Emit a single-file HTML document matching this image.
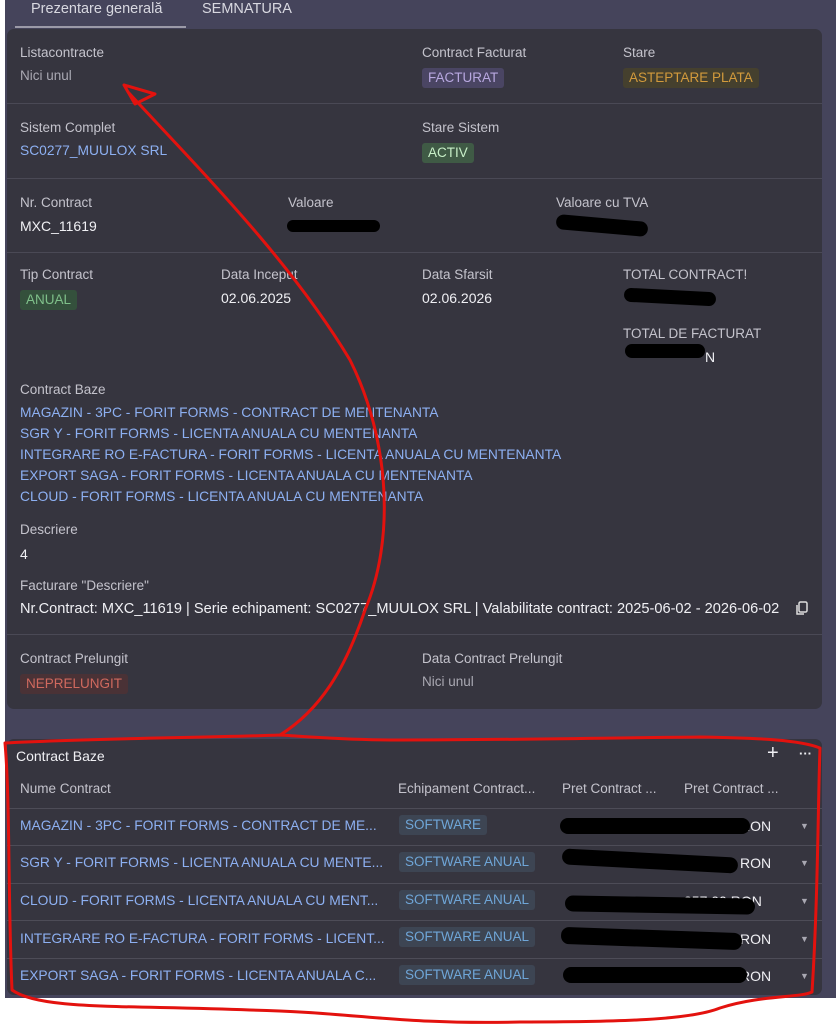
<!DOCTYPE html>
<html><head><meta charset="utf-8"><style>
*{margin:0;padding:0;box-sizing:border-box}
body{width:836px;height:1027px;background:#fff;position:relative;overflow:hidden;font-family:"Liberation Sans",sans-serif;font-size:13.5px}
.a{position:absolute;white-space:nowrap;line-height:16px}
.bg{position:absolute;left:5px;top:0;width:831px;height:998px;background:#45445b}
.card{position:absolute;left:7px;width:815px;background:#36353f;border-radius:7px}
.l{color:#c4c3cc}
.v{color:#f0f0f4;font-size:14px}
.k{color:#8db0f2;font-size:13.8px}
.m{color:#a9a8b2}
.hr{position:absolute;left:7px;width:815px;height:1px;background:#4a4955}
.tag{position:absolute;padding:2px 6px;border-radius:3px;line-height:16px;font-size:13.5px}
.t2{position:absolute;left:7px;width:815px;height:1px;background:#4d4c57}
.sw{background:#3d4553;color:#6fa6d8}
.blk{position:absolute;background:#000;border-radius:8px}
</style></head><body>
<div class="bg"></div>
<div class="a" style="left:31px;top:1px;color:#d8d8e0;font-size:14.5px">Prezentare generală</div>
<div class="a" style="left:202px;top:1px;color:#d8d8e0;font-size:14.5px">SEMNATURA</div>
<div style="position:absolute;left:15px;top:26px;width:171px;height:2px;background:#9b9aa8"></div>

<div class="card" style="top:29px;height:680px"></div>
<div class="a l" style="left:20px;top:45px">Listacontracte</div>
<div class="a m" style="left:20px;top:68px">Nici unul</div>
<div class="a l" style="left:422px;top:45px">Contract Facturat</div>
<div class="tag" style="left:422px;top:68px;background:#4a4563;color:#b8a8e0">FACTURAT</div>
<div class="a l" style="left:623px;top:45px">Stare</div>
<div class="tag" style="left:623px;top:68px;background:#45402e;color:#d29a3c">ASTEPTARE PLATA</div>
<div class="hr" style="top:103px"></div>
<div class="a l" style="left:20px;top:120px">Sistem Complet</div>
<div class="a k" style="left:20px;top:143px">SC0277_MUULOX SRL</div>
<div class="a l" style="left:422px;top:120px">Stare Sistem</div>
<div class="tag" style="left:422px;top:143px;background:#3f5a45;color:#c8f0c8">ACTIV</div>
<div class="hr" style="top:178px"></div>
<div class="a l" style="left:20px;top:195px">Nr. Contract</div>
<div class="a v" style="left:20px;top:218px">MXC_11619</div>
<div class="a l" style="left:288px;top:195px">Valoare</div>
<div class="a l" style="left:556px;top:195px">Valoare cu TVA</div>
<div class="hr" style="top:252px"></div>
<div class="a l" style="left:20px;top:267px">Tip Contract</div>
<div class="tag" style="left:20px;top:290px;background:#34503c;color:#7fc08a">ANUAL</div>
<div class="a l" style="left:221px;top:267px">Data Inceput</div>
<div class="a v" style="left:221px;top:290px">02.06.2025</div>
<div class="a l" style="left:422px;top:267px">Data Sfarsit</div>
<div class="a v" style="left:422px;top:290px">02.06.2026</div>
<div class="a l" style="left:623px;top:267px">TOTAL CONTRACT!</div>
<div class="a l" style="left:623px;top:326px">TOTAL DE FACTURAT</div>
<div class="a v" style="left:705px;top:349px">N</div>
<div class="a l" style="left:20px;top:382px">Contract Baze</div>
<div class="a k" style="left:20px;top:405px">MAGAZIN - 3PC - FORIT FORMS - CONTRACT DE MENTENANTA</div>
<div class="a k" style="left:20px;top:426px">SGR Y - FORIT FORMS - LICENTA ANUALA CU MENTENANTA</div>
<div class="a k" style="left:20px;top:447px">INTEGRARE RO E-FACTURA - FORIT FORMS - LICENTA ANUALA CU MENTENANTA</div>
<div class="a k" style="left:20px;top:468px">EXPORT SAGA - FORIT FORMS - LICENTA ANUALA CU MENTENANTA</div>
<div class="a k" style="left:20px;top:489px">CLOUD - FORIT FORMS - LICENTA ANUALA CU MENTENANTA</div>
<div class="a l" style="left:20px;top:522px">Descriere</div>
<div class="a v" style="left:20px;top:546px">4</div>
<div class="a l" style="left:20px;top:578px">Facturare "Descriere"</div>
<div class="a v" style="left:20px;top:601px;font-size:14.6px">Nr.Contract: MXC_11619 | Serie echipament: SC0277_MUULOX SRL | Valabilitate contract: 2025-06-02 - 2026-06-02</div>
<svg style="position:absolute;left:795px;top:601px" width="14" height="15" viewBox="0 0 14 15"><rect x="4" y="1" width="8" height="10" rx="1.5" fill="none" stroke="#ddd" stroke-width="1.5"/><path d="M2 4v9h7" fill="none" stroke="#ddd" stroke-width="1.5"/></svg>
<div class="hr" style="top:634px"></div>
<div class="a l" style="left:20px;top:651px">Contract Prelungit</div>
<div class="tag" style="left:20px;top:674px;background:#4a3236;color:#d0695e">NEPRELUNGIT</div>
<div class="a l" style="left:422px;top:651px">Data Contract Prelungit</div>
<div class="a m" style="left:422px;top:674px">Nici unul</div>

<div class="card" style="top:739px;height:256px"></div>
<div class="a v" style="left:16px;top:748px;font-size:14px">Contract Baze</div>
<div class="a v" style="left:767px;top:745px;font-size:20px">+</div>
<div class="a v" style="left:799px;top:746px;font-size:13px;font-weight:bold">···</div>
<div class="a l" style="left:20px;top:781px">Nume Contract</div>
<div class="a l" style="left:398px;top:781px">Echipament Contract...</div>
<div class="a l" style="left:562px;top:781px">Pret Contract ...</div>
<div class="a l" style="left:684px;top:781px">Pret Contract ...</div>
<div class="t2" style="top:808px"></div>
<div class="t2" style="top:845px"></div>
<div class="t2" style="top:883px"></div>
<div class="t2" style="top:920px"></div>
<div class="t2" style="top:958px"></div>
<div class="a k" style="left:20px;top:818px">MAGAZIN - 3PC - FORIT FORMS - CONTRACT DE ME...</div>
<div class="a k" style="left:20px;top:855px">SGR Y - FORIT FORMS - LICENTA ANUALA CU MENTE...</div>
<div class="a k" style="left:20px;top:893px">CLOUD - FORIT FORMS - LICENTA ANUALA CU MENT...</div>
<div class="a k" style="left:20px;top:931px">INTEGRARE RO E-FACTURA - FORIT FORMS - LICENT...</div>
<div class="a k" style="left:20px;top:968px">EXPORT SAGA - FORIT FORMS - LICENTA ANUALA C...</div>
<div class="tag sw" style="left:399px;top:815px">SOFTWARE</div>
<div class="tag sw" style="left:399px;top:852px">SOFTWARE ANUAL</div>
<div class="tag sw" style="left:399px;top:890px">SOFTWARE ANUAL</div>
<div class="tag sw" style="left:399px;top:927px">SOFTWARE ANUAL</div>
<div class="tag sw" style="left:399px;top:965px">SOFTWARE ANUAL</div>
<div class="a v" style="left:740px;top:818px">RON</div>
<div class="a v" style="left:740px;top:855px">RON</div>
<div class="a v" style="left:684px;top:893px">357.00 RON</div>
<div class="a v" style="left:740px;top:931px">RON</div>
<div class="a v" style="left:740px;top:968px">RON</div>
<div class="a m" style="left:800px;top:818px;font-size:9px">▼</div>
<div class="a m" style="left:800px;top:855px;font-size:9px">▼</div>
<div class="a m" style="left:800px;top:893px;font-size:9px">▼</div>
<div class="a m" style="left:800px;top:931px;font-size:9px">▼</div>
<div class="a m" style="left:800px;top:968px;font-size:9px">▼</div>

<div class="blk" style="left:287px;top:220px;width:93px;height:12px"></div>
<div class="blk" style="left:556px;top:218px;width:92px;height:15px;transform:rotate(5deg)"></div>
<div class="blk" style="left:624px;top:290px;width:92px;height:14px;transform:rotate(3deg)"></div>
<div class="blk" style="left:625px;top:344px;width:80px;height:14px"></div>
<div class="blk" style="left:560px;top:818px;width:190px;height:16px"></div>
<div class="blk" style="left:562px;top:853px;width:176px;height:16px;transform:rotate(3deg)"></div>
<div class="blk" style="left:565px;top:897px;width:190px;height:16px;transform:rotate(1deg)"></div>
<div class="blk" style="left:561px;top:930px;width:181px;height:17px;transform:rotate(2deg)"></div>
<div class="blk" style="left:563px;top:967px;width:184px;height:16px"></div>

<svg style="position:absolute;left:0;top:0" width="836" height="1027"><g fill="none" stroke="#e3120e" stroke-width="3" stroke-linecap="round" stroke-linejoin="round">
<path d="M124 85 L155 94 L135 104 L124 85 M128 92 C200 170 290 260 350 360 C390 440 395 540 365 610 C345 670 320 710 280 735"/>
<path d="M280 735 C200 738 100 738 5 743 C10 800 8 900 12 990 C40 1010 120 1005 250 1010 C350 1012 400 1025 520 1022 C620 1022 690 1020 720 1008 C760 995 800 998 812 992 C818 900 818 800 820 748 C800 740 760 738 700 737 C600 738 500 740 400 740 C340 740 300 736 280 735"/>
</g></svg>
</body></html>
